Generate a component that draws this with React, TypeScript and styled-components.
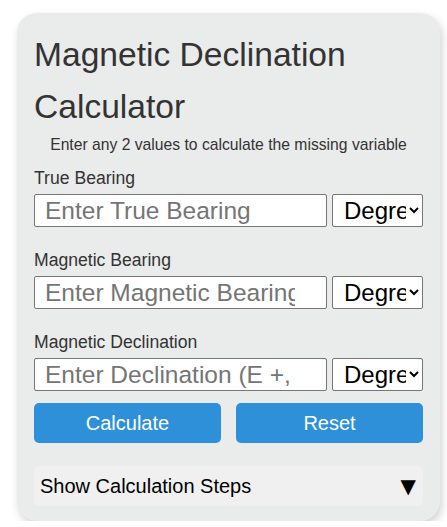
import React, { useState } from "react";
import styled, { createGlobalStyle } from "styled-components";

const GlobalStyle = createGlobalStyle`
  body {
    margin: 0;
    background: #ffffff;
    font-family: "Liberation Sans", Arial, sans-serif;
  }
  * {
    box-sizing: border-box;
  }
`;

const Card = styled.div`
  width: 423px;
  margin: 13px 0 0 17px;
  padding: 16px 17px 15px;
  background: #eaebeb;
  border-radius: 20px;
  box-shadow: 2px 4px 8px rgba(0, 0, 0, 0.18);
`;

const Title = styled.h1`
  margin: 0;
  font-size: 33.6px;
  line-height: 52px;
  font-weight: normal;
  color: #333333;
`;

const Subtitle = styled.p`
  margin: 3px 0 0;
  font-size: 15.7px;
  line-height: 18px;
  text-align: center;
  color: #333333;
`;

const Field = styled.div<{ $first?: boolean }>`
  margin-top: ${({ $first }) => ($first ? "14px" : "23px")};
`;

const Label = styled.label`
  display: block;
  font-size: 17.6px;
  line-height: 20px;
  color: #333333;
  margin-bottom: 6px;
`;

const InputRow = styled.div`
  display: flex;
  gap: 5px;
`;

const TextInput = styled.input`
  flex: 1;
  min-width: 0;
  height: 33px;
  padding: 0 31px 0 10px;
  font-family: "Liberation Sans", Arial, sans-serif;
  font-size: 24.5px;
  color: #000;
  background: #ffffff;
  border: 1px solid #767676;
  border-radius: 2px;

  &::placeholder {
    color: #757575;
  }
`;

const UnitSelect = styled.select`
  width: 91px;
  height: 33px;
  padding: 0 0 0 7px;
  font-family: "Liberation Sans", Arial, sans-serif;
  font-size: 24px;
  color: #000;
  background: #ffffff;
  border: 1px solid #767676;
  border-radius: 2px;
`;

const ButtonRow = styled.div`
  display: grid;
  grid-template-columns: 1fr 1fr;
  gap: 15px;
  margin-top: 12px;
`;

const ActionButton = styled.button`
  height: 40px;
  border: none;
  border-radius: 5px;
  background: #2e90d8;
  color: #ffffff;
  font-family: "Liberation Sans", Arial, sans-serif;
  font-size: 20px;
  cursor: pointer;
`;

const Steps = styled.details`
  margin-top: 23px;
  background: #f0f0f0;
  border-radius: 5px;
`;

const StepsSummary = styled.summary`
  display: flex;
  justify-content: space-between;
  align-items: center;
  height: 40px;
  padding: 0 7px 0 6px;
  list-style: none;
  font-size: 20px;
  color: #000;
  cursor: pointer;

  &::-webkit-details-marker {
    display: none;
  }
`;

const Arrow = styled.span`
  font-size: 20px;
  font-family: "DejaVu Sans", sans-serif;
`;

const fields = [
  { id: "true", label: "True Bearing", placeholder: "Enter True Bearing" },
  { id: "magnetic", label: "Magnetic Bearing", placeholder: "Enter Magnetic Bearing" },
  { id: "declination", label: "Magnetic Declination", placeholder: "Enter Declination (E +, W -)" },
];

const App = () => {
  const [values, setValues] = useState<Record<string, string>>({});

  return (
    <>
      <GlobalStyle />
      <Card>
        <Title>Magnetic Declination Calculator</Title>
        <Subtitle>Enter any 2 values to calculate the missing variable</Subtitle>
        {fields.map((f, i) => (
          <Field key={f.id} $first={i === 0}>
            <Label htmlFor={f.id}>{f.label}</Label>
            <InputRow>
              <TextInput
                id={f.id}
                placeholder={f.placeholder}
                value={values[f.id] ?? ""}
                onChange={(e) => setValues({ ...values, [f.id]: e.target.value })}
              />
              <UnitSelect defaultValue="deg">
                <option value="deg">Degrees</option>
                <option value="rad">Radians</option>
              </UnitSelect>
            </InputRow>
          </Field>
        ))}
        <ButtonRow>
          <ActionButton type="button">Calculate</ActionButton>
          <ActionButton type="button" onClick={() => setValues({})}>
            Reset
          </ActionButton>
        </ButtonRow>
        <Steps>
          <StepsSummary>
            Show Calculation Steps
            <Arrow>▼</Arrow>
          </StepsSummary>
        </Steps>
      </Card>
    </>
  );
};

export default App;
